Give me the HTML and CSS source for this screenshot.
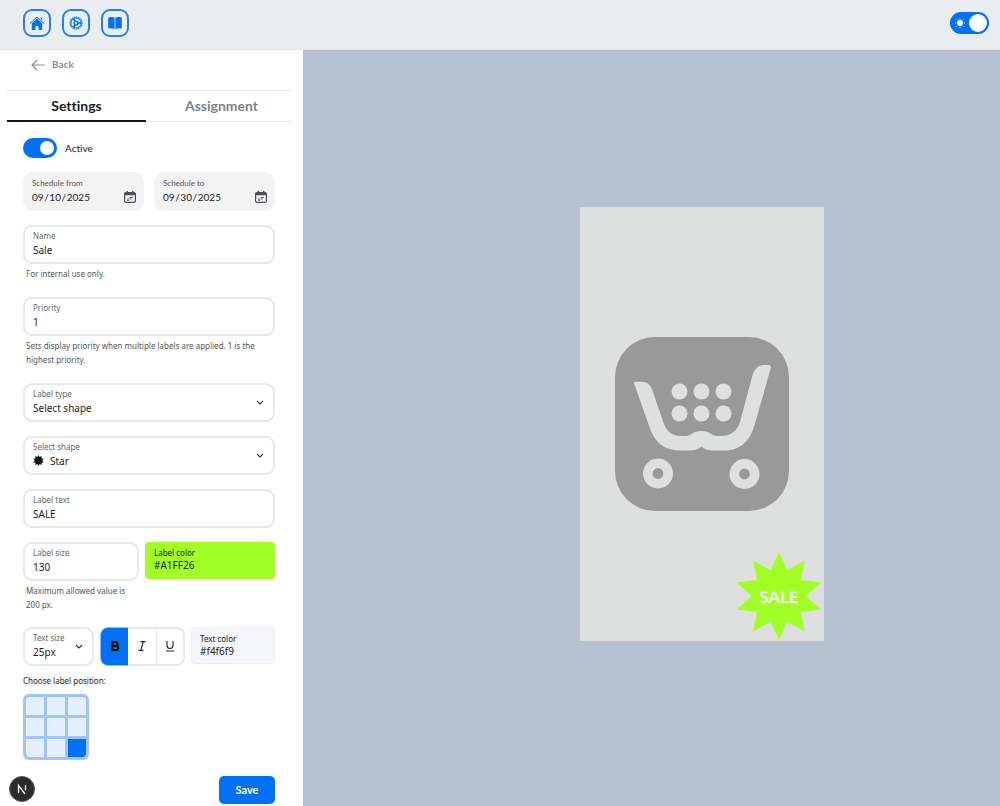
FILE: index.html
```html
<!DOCTYPE html>
<html lang="en">
<head>
<meta charset="utf-8">
<title>Label settings</title>
<link rel="stylesheet" href="styles.css">
</head>
<body>
<header class="topbar">
  <nav class="topnav" aria-label="Main">
    <a class="navbtn" href="#home" aria-label="Home">
      <svg width="18" height="18" viewBox="0 0 18 18"><path d="M2 9.600 9 3l7 6.600" fill="none" stroke="#0071f2" stroke-width="1"/><path d="M9 4.600 14.200 9.400v5.800a.8.8 0 0 1-.8.8h-2.800v-2.600a1.600 1.600 0 0 0-3.200 0V16H4.600a.8.8 0 0 1-.8-.8V9.400zM12.800 3.500h1.400v2.700l-1.400-1.300z" fill="#0071f2"/></svg>
    </a>
    <a class="navbtn" href="#settings" aria-label="Settings">
      <svg width="16" height="16" viewBox="0 0 16 16" fill="none" stroke="#0071f2"><circle cx="8" cy="8" r="6" stroke-width="1.200" stroke-dasharray="1.300 .65"/><circle cx="8" cy="8" r="5"/><circle cx="8" cy="8" r="1.900" stroke-width="1.400"/><path d="M9.800 8h3.200M7.100 6.400 5.400 3.500M7.100 9.600l-1.700 2.900" stroke-width="1.700"/></svg>
    </a>
    <a class="navbtn" href="#docs" aria-label="Documentation">
      <svg width="16" height="14" viewBox="0 0 16 14" fill="#0071f2"><path d="M1.200 1.500Q4.500.4 7.600 1.500v11.600Q4.500 12 1.200 12.500zM8.400 1.500Q11.500.4 14.800 1.500v11q-3.300-.5-6.400.6z"/></svg>
    </a>
  </nav>
  <label class="theme">
    <input class="switch switch-theme" type="checkbox" role="switch" aria-label="Light theme" checked>
    <svg class="sun" width="12" height="12" viewBox="0 0 12 12"><circle cx="6" cy="6" r="2.900" fill="#fff"/><path d="M6 1v1.300M6 9.700V11M1 6h1.300M9.700 6H11M2.500 2.500l.9.9M8.600 8.600l.9.9M2.500 9.500l.9-.9M8.600 3.400l.9-.9" stroke="#fff" stroke-width=".9"/></svg>
  </label>
</header>
<div class="workspace">
  <aside class="sidebar">
    <div class="backrow">
      <a class="back" href="#back"><svg width="14" height="12" viewBox="0 0 14 12" fill="none" stroke="#8a8f99" stroke-width="1.200"><path d="M14 6H1M6 1 1 6l5 5"/></svg>Back</a>
    </div>
    <div class="tabs" role="tablist">
      <button class="tab tab-on" role="tab" aria-selected="true">Settings</button>
      <button class="tab" role="tab" aria-selected="false">Assignment</button>
    </div>
    <form class="form">
      <label class="active"><input class="switch" type="checkbox" role="switch" checked>Active</label>
      <div class="dates">
        <div class="date">
          <div class="datetext"><label for="from">Schedule from</label><input id="from" type="text" value="09&#8202;/&#8202;10&#8202;/&#8202;2025"></div>
          <svg width="12" height="12" viewBox="0 0 12 12"><rect x=".6" y="1.600" width="10.800" height="9.800" rx="1.500" fill="none" stroke="#4b4f55" stroke-width="1.200"/><path d="M.6 2h10.800v2.300H.6zM2.500 0H4v2H2.500zM8 0h1.500v2H8z" fill="#4b4f55"/><path d="M3 8h2M5.500 6.500H9M5.500 8h2M3 9.300h2" stroke="#4b4f55" stroke-width=".9"/></svg>
        </div>
        <div class="date">
          <div class="datetext"><label for="to">Schedule to</label><input id="to" type="text" value="09&#8202;/&#8202;30&#8202;/&#8202;2025"></div>
          <svg width="12" height="12" viewBox="0 0 12 12"><rect x=".6" y="1.600" width="10.800" height="9.800" rx="1.500" fill="none" stroke="#4b4f55" stroke-width="1.200"/><path d="M.6 2h10.800v2.300H.6zM2.500 0H4v2H2.500zM8 0h1.500v2H8z" fill="#4b4f55"/><path d="M3 8h2M5.500 6.500H9M5.500 8h2M3 9.300h2" stroke="#4b4f55" stroke-width=".9"/></svg>
        </div>
      </div>
      <div class="group">
        <div class="field"><label for="name">Name</label><input id="name" type="text" value="Sale"></div>
        <p class="help">For internal use only.</p>
      </div>
      <div class="group">
        <div class="field"><label for="priority">Priority</label><input id="priority" type="text" value="1"></div>
        <p class="help">Sets display priority when multiple labels are applied. 1 is the highest priority.</p>
      </div>
      <div class="field pick">
        <div class="pickbody"><label for="type">Label type</label><select id="type"><option>Select shape</option></select></div>
        <svg class="chev" width="8" height="6" viewBox="0 0 8 6"><path d="m1 1 3 3 3-3" fill="none" stroke="#333" stroke-width="1.100"/></svg>
      </div>
      <div class="field pick">
        <div class="pickbody"><label for="shape">Select shape</label>
          <div class="shape"><svg width="11" height="11" viewBox="-44 -44 88 88"><polygon fill="#111" points="0,-44 9,-28 26,-36 24,-17 42,-14 30,0 42,14 24,17 26,36 9,28 0,44 -9,28 -26,36 -24,17 -42,14 -30,0 -42,-14 -24,-17 -26,-36 -9,-28"/></svg><select id="shape"><option>Star</option></select></div>
        </div>
        <svg class="chev" width="8" height="6" viewBox="0 0 8 6"><path d="m1 1 3 3 3-3" fill="none" stroke="#333" stroke-width="1.100"/></svg>
      </div>
      <div class="field"><label for="text">Label text</label><input id="text" type="text" value="SALE"></div>
      <div class="group sizes">
        <div>
          <div class="field"><label for="size">Label size</label><input id="size" type="text" value="130"></div>
          <p class="help">Maximum allowed value is 200 px.</p>
        </div>
        <div class="color color-label"><label for="lcolor">Label color</label><input id="lcolor" type="text" value="#A1FF26"></div>
      </div>
      <div class="textrow">
        <div class="field pick">
          <div class="pickbody"><label for="tsize">Text size</label><select id="tsize"><option>25px</option></select></div>
          <svg class="chev" width="8" height="6" viewBox="0 0 8 6"><path d="m1 1 3 3 3-3" fill="none" stroke="#333" stroke-width="1.100"/></svg>
        </div>
        <div class="styles">
          <button class="style style-on" type="button" aria-label="Bold" aria-pressed="true"><svg width="10" height="12" viewBox="0 0 10 12" fill="none" stroke="#111" stroke-width="2.200"><path d="M2.200 2h3.300a1.900 1.900 0 0 1 0 3.900H2.200zM2.200 5.900h3.900a2 2 0 0 1 0 4.100H2.200z"/></svg></button>
          <button class="style" type="button" aria-label="Italic"><svg width="10" height="12" viewBox="0 0 10 12" fill="none" stroke="#222" stroke-width="1.200"><path d="M3.500 1.600h5M1.500 10.400h5M6.200 1.600 3.800 10.400"/></svg></button>
          <button class="style" type="button" aria-label="Underline"><svg width="10" height="12" viewBox="0 0 10 12" fill="none" stroke="#222" stroke-width="1.100"><path d="M2 1v4.500a3 3 0 0 0 6 0V1M1 11h8"/></svg></button>
        </div>
        <div class="color color-text"><label for="tcolor">Text color</label><input id="tcolor" type="text" value="#f4f6f9"></div>
      </div>
      <fieldset class="position">
        <legend>Choose label position:</legend>
        <div class="grid">
          <input type="radio" name="pos" aria-label="Top left"><input type="radio" name="pos" aria-label="Top center"><input type="radio" name="pos" aria-label="Top right">
          <input type="radio" name="pos" aria-label="Middle left"><input type="radio" name="pos" aria-label="Center"><input type="radio" name="pos" aria-label="Middle right">
          <input type="radio" name="pos" aria-label="Bottom left"><input type="radio" name="pos" aria-label="Bottom center"><input type="radio" name="pos" aria-label="Bottom right" checked>
        </div>
      </fieldset>
      <button class="save" type="submit">Save</button>
    </form>
  </aside>
  <main class="preview">
    <div class="card">
      <svg class="cart" viewBox="0 0 174 174">
        <rect width="174" height="174" rx="40" fill="#999"/>
        <g fill="#dee0df">
          <path d="M19.300 47Q18.500 44.700 21 44.700h6c5.500 0 9 4 10.500 9l11 32c3.500 9.500 9 13.300 18 13.300h4c3 0 5-1 7.500-3 4.500-2.800 12.500-2.800 17 0 2.500 2 4.500 3 7.500 3h3c10 0 16.500-4.500 19.500-14l12-45c2.200-8 6-12 12.500-12h4q3 0 2.300 3L141 83c-5 20-14 30.500-32 30.500H99c-6 0-9-1-12.500-4-3.500 3-7 4-13 4H66c-18 0-27-9-32-25z"/>
          <circle cx="64.500" cy="54.500" r="8"/><circle cx="86.500" cy="54.500" r="8"/><circle cx="108.500" cy="54.500" r="8"/>
          <circle cx="64.500" cy="76.500" r="8"/><circle cx="86.500" cy="76.500" r="8"/><circle cx="108.500" cy="76.500" r="8"/>
        </g>
        <g fill="none" stroke="#dee0df" stroke-width="9.600"><circle cx="43" cy="136.500" r="10.200"/><circle cx="129.500" cy="137" r="10.200"/></g>
      </svg>
      <div class="badge">
        <svg class="star" viewBox="-43 -44 86 88"><polygon fill="#a1ff26" points="0,-44 8.300,-25.700 25.900,-35.600 21.800,-15.900 42.500,-13.600 27,0 42.500,13.600 21.800,15.900 25.900,35.600 8.300,25.700 0,44 -8.300,25.700 -25.900,35.600 -21.800,15.900 -42.500,13.600 -27,0 -42.500,-13.600 -21.800,-15.900 -25.900,-35.600 -8.300,-25.700"/></svg>
        <span>SALE</span>
      </div>
    </div>
  </main>
</div>
<button class="devtools" aria-label="Developer tools"><svg width="12" height="12" viewBox="0 0 12 12" fill="none" stroke="#fff" stroke-width="1.300"><path d="M2.500 10V2.500l6.500 8.500M9.500 2v5.500"/></svg></button>
</body>
</html>
```
FILE: styles.css
```css
* { box-sizing: border-box; }
body {
  margin: 0;
  min-height: 100vh;
  display: flex;
  flex-direction: column;
  font-family: Lato, sans-serif;
  font-size: 11px;
  font-variant-ligatures: none;
  color: #222;
}
input, select, button { font: inherit; font-variant-ligatures: none; color: inherit; }
button { cursor: pointer; }
svg { display: block; flex: none; }

.topbar {
  display: flex;
  align-items: center;
  justify-content: space-between;
  padding: 9px 11px 12px 23px;
  background: #e9edf0;
  border-bottom: 1px solid #dfe3e6;
}
.topnav { display: flex; gap: 11px; }
.navbtn {
  display: grid;
  place-items: center;
  width: 28px;
  height: 28px;
  border: 2px solid #2a80ea;
  border-radius: 9px;
}
.theme { display: grid; align-items: center; }
.theme > * { grid-area: 1 / 1; }
.sun { margin-left: 4px; }

.switch {
  appearance: none;
  display: flex;
  align-items: center;
  justify-content: flex-end;
  width: 34px;
  height: 20px;
  margin: 0;
  padding: 0 3px;
  border-radius: 10px;
  background: #0071f2;
}
.switch::before {
  content: "";
  width: 14px;
  height: 14px;
  border-radius: 50%;
  background: #fff;
}
.switch-theme { width: 39px; height: 22px; border-radius: 11px; padding: 0 2px; }
.switch-theme::before { width: 18px; height: 18px; }

.workspace { flex: 1; display: flex; }
.sidebar { flex: none; width: 303px; background: #fff; }
.backrow { margin: 0 11px 0 7px; padding: 7px 24px 17px; border-bottom: 1px solid #e6e8ea; }
.back {
  display: inline-flex;
  align-items: center;
  gap: 7px;
  line-height: 15px;
  font-size: 10px;
  font-weight: 700;
  color: #8a8f99;
  text-decoration: none;
}
.tabs { display: grid; grid-template-columns: 139px 1fr; margin: 0 11px 0 7px; }
.tab {
  height: 31px;
  padding: 0 0 0 5px;
  border: 0;
  border-bottom: 1px solid #e6e8ea;
  background: none;
  font-size: 14px;
  font-weight: 700;
  color: #7f8388;
}
.tab-on { padding: 0; border-bottom: 2px solid #15171a; color: #1c1e21; }

.form { display: flex; flex-direction: column; gap: 14px; padding: 16px 28px 2px 23px; }
.active { display: flex; align-items: center; gap: 8px; font-size: 10px; }
.dates { display: grid; grid-template-columns: 1fr 1fr; gap: 10px; }
.date {
  display: flex;
  align-items: center;
  justify-content: space-between;
  height: 39px;
  padding: 0 8px 0 9px;
  border-radius: 10px;
  background: #f3f3f3;
}
.date svg { margin-top: 11px; }
.datetext { flex: 1; min-width: 0; display: grid; padding-bottom: 3px; }
.date label { font-size: 8px; line-height: 14px; color: #555; }
.date input { width: 100%; font-size: 10px; }
.date input, .field input, .field select, .color input {
  height: 14px;
  padding: 0;
  border: 0;
  background: none;
  line-height: 14px;
}

.group { margin-bottom: 2px; }
.field, .color, .help, .position { font-family: "Noto Sans", sans-serif; }
.field {
  display: grid;
  height: 39px;
  padding: 2px 8px 5px;
  border: 2px solid #e7e7e8;
  border-radius: 9px;
  background: #fff;
}
.field label { font-size: 8px; line-height: 14px; color: #666; }
.field input, .field select, .color input { width: 100%; font-size: 10px; }
.field select { appearance: none; }
.pick { display: flex; align-items: center; justify-content: space-between; }
.pickbody { flex: 1; min-width: 0; display: grid; }
.chev { margin: 4px 1px 0 0; }
.shape { display: flex; align-items: center; gap: 6px; }
.help { margin: 3px 3px 0; font-size: 8px; line-height: 14px; color: #555; }

.sizes { display: grid; grid-template-columns: 116px 1fr; gap: 6px; margin-bottom: 1px; }
.color { display: grid; align-content: start; height: 37px; padding: 5px 9px; border-radius: 4px; }
.color label { font-size: 8px; line-height: 12px; }
.color input { height: 13px; line-height: 13px; }
.color-label { background: #a1ff26; }
.color-text { background: #f4f6f9; border: 1px solid #ebedf0; padding: 5px 8px; }

.textrow { display: grid; grid-template-columns: 71px 85px 1fr; gap: 6px; align-items: start; }
.styles {
  display: grid;
  grid-template-columns: repeat(3, 1fr);
  height: 39px;
  border-radius: 8px;
  overflow: hidden;
}
.style {
  display: grid;
  place-items: center;
  padding: 0;
  border: 2px solid #e7e7e8;
  border-left-width: 0;
  background: #fff;
}
.style:nth-child(2) { border-right-width: 1px; }
.style:last-child { border-radius: 0 8px 8px 0; }
.style-on { background: #0071f2; border-width: 1px 0 1px 1px; border-color: #8fbff8; border-radius: 8px 0 0 8px; }

.position { margin: -6px 0 0; padding: 0; border: 0; }
.position legend { padding: 0; font-size: 8px; line-height: 14px; }
.grid {
  display: inline-grid;
  grid-template-columns: repeat(3, 18px);
  gap: 3px;
  margin-top: 6px;
  padding: 3px;
  border-radius: 6px;
  background: #9dc5f8;
  vertical-align: top;
}
.grid input { appearance: none; width: 18px; height: 18px; margin: 0; background: #e4f0fd; }
.grid input:checked { background: #0071f2; }
.grid input:first-child { border-top-left-radius: 4px; }
.grid input:nth-child(3) { border-top-right-radius: 4px; }
.grid input:nth-child(7) { border-bottom-left-radius: 4px; }
.grid input:last-child { border-bottom-right-radius: 4px; }

.save {
  align-self: flex-end;
  width: 56px;
  height: 28px;
  margin-top: 2px;
  padding: 0;
  border: 0;
  border-radius: 5px;
  background: #0071f2;
  font-size: 11px;
  font-weight: 700;
  color: #fff;
}

.preview {
  flex: 1;
  display: grid;
  place-items: center;
  padding: 0 0 8px 101px;
  background: #b5c3d1;
}
.card {
  position: relative;
  display: grid;
  place-items: center;
  width: 244px;
  aspect-ratio: 244 / 434;
  background: #dee0df;
}
.cart { width: 174px; }
.badge { position: absolute; right: 2px; bottom: 1px; display: grid; place-items: center; }
.badge > * { grid-area: 1 / 1; }
.star { width: 86px; }
.badge span { font-size: 17px; font-weight: 700; color: #f4f6f9; }

.devtools {
  position: fixed;
  left: 9px;
  bottom: 4px;
  display: grid;
  place-items: center;
  width: 26px;
  height: 26px;
  padding: 0;
  border: 1px solid #555;
  border-radius: 50%;
  background: #2b2b2b;
}
```
